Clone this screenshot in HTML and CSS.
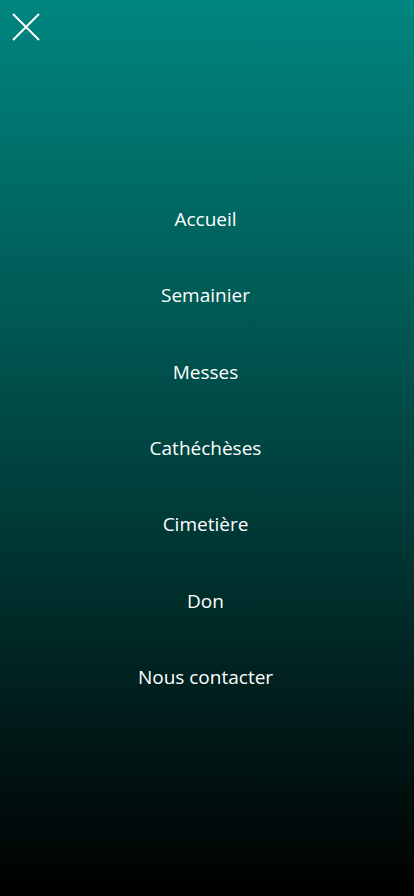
FILE: index.html
```html
<!DOCTYPE html>
<html lang="fr">
<head>
<meta charset="utf-8">
<title>Menu</title>
<link rel="stylesheet" href="styles.css">
</head>
<body>
<div class="screen">
  <header class="top">
    <button class="close" aria-label="Fermer">
      <svg width="28" height="28" viewBox="0 0 28 28"><path d="M1 1 L27 27 M27 1 L1 27" stroke="#fff" stroke-width="2" fill="none"/></svg>
    </button>
  </header>
  <nav class="menu">
    <a class="item" href="#">Accueil</a>
    <a class="item" href="#">Semainier</a>
    <a class="item" href="#">Messes</a>
    <a class="item" href="#">Cathéchèses</a>
    <a class="item" href="#">Cimetière</a>
    <a class="item" href="#">Don</a>
    <a class="item" href="#">Nous contacter</a>
  </nav>
</div>
</body>
</html>
```
FILE: styles.css
```css
html, body {
  margin: 0;
  padding: 0;
}
body {
  font-family: "Open Sans", "Noto Sans", sans-serif;
}
.screen {
  width: 414px;
  height: 896px;
  background: linear-gradient(to bottom, #008680 0%, #004541 50%, #000 100%);
  display: flex;
  flex-direction: column;
}
.top {
  height: 54px;
  padding: 13px 0 0 12px;
  box-sizing: border-box;
}
.close {
  width: 28px;
  height: 28px;
  padding: 0;
  border: 0;
  background: none;
  display: block;
}
.close svg {
  display: block;
}
.menu {
  display: flex;
  flex-direction: column;
  align-items: center;
  margin-top: 127px;
  padding-right: 3px;
}
.item {
  height: 76.33px;
  display: flex;
  align-items: center;
  justify-content: center;
  color: #fff;
  text-decoration: none;
  font-size: 19px;
  letter-spacing: 0;
}
```
